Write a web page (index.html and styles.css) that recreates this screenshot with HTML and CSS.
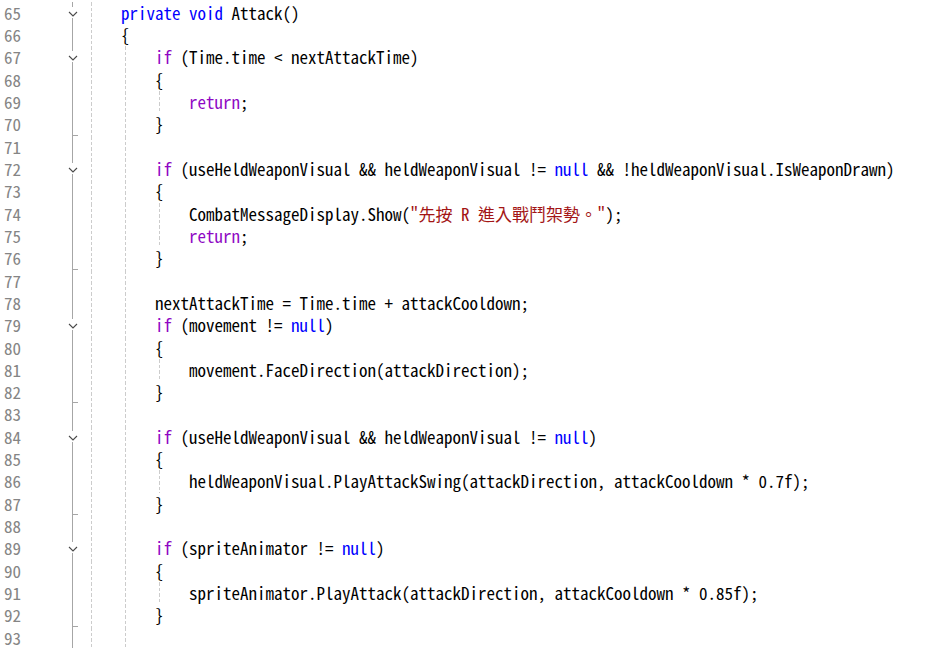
FILE: index.html
```html
<!DOCTYPE html>
<html lang="zh-Hant">
<head>
<meta charset="utf-8">
<title>Attack</title>
<link rel="stylesheet" href="styles.css">
</head>
<body>
<div class="editor">
  <div class="row"><span class="num">65</span><span class="fold chev"><svg class="chv" width="10" height="6" viewBox="0 0 10 6"><path d="M1 1L5 5L9 1"/></svg></span><span class="code"><span class="kw">private</span> <span class="kw">void</span> Attack()</span></div>
  <div class="row"><span class="num">66</span><span class="fold bar"></span><span class="code">{</span></div>
  <div class="row"><span class="num">67</span><span class="fold chev"><svg class="chv" width="10" height="6" viewBox="0 0 10 6"><path d="M1 1L5 5L9 1"/></svg></span><span class="code"><span class="g"></span><span class="ctl">if</span> (Time.time &lt; nextAttackTime)</span></div>
  <div class="row"><span class="num">68</span><span class="fold bar"></span><span class="code"><span class="g"></span>{</span></div>
  <div class="row"><span class="num">69</span><span class="fold bar"></span><span class="code"><span class="g"></span><span class="g"></span><span class="ctl">return</span>;</span></div>
  <div class="row"><span class="num">70</span><span class="fold end"></span><span class="code"><span class="g"></span>}</span></div>
  <div class="row"><span class="num">71</span><span class="fold bar"></span><span class="code"><span class="g"></span></span></div>
  <div class="row"><span class="num">72</span><span class="fold chev"><svg class="chv" width="10" height="6" viewBox="0 0 10 6"><path d="M1 1L5 5L9 1"/></svg></span><span class="code"><span class="g"></span><span class="ctl">if</span> (useHeldWeaponVisual &amp;&amp; heldWeaponVisual != <span class="kw">null</span> &amp;&amp; !heldWeaponVisual.IsWeaponDrawn)</span></div>
  <div class="row"><span class="num">73</span><span class="fold bar"></span><span class="code"><span class="g"></span>{</span></div>
  <div class="row"><span class="num">74</span><span class="fold bar"></span><span class="code"><span class="g"></span><span class="g"></span>CombatMessageDisplay.Show(<span class="str">"先按 R 進入戰鬥架勢。"</span>);</span></div>
  <div class="row"><span class="num">75</span><span class="fold bar"></span><span class="code"><span class="g"></span><span class="g"></span><span class="ctl">return</span>;</span></div>
  <div class="row"><span class="num">76</span><span class="fold end"></span><span class="code"><span class="g"></span>}</span></div>
  <div class="row"><span class="num">77</span><span class="fold bar"></span><span class="code"><span class="g"></span></span></div>
  <div class="row"><span class="num">78</span><span class="fold bar"></span><span class="code"><span class="g"></span>nextAttackTime = Time.time + attackCooldown;</span></div>
  <div class="row"><span class="num">79</span><span class="fold chev"><svg class="chv" width="10" height="6" viewBox="0 0 10 6"><path d="M1 1L5 5L9 1"/></svg></span><span class="code"><span class="g"></span><span class="ctl">if</span> (movement != <span class="kw">null</span>)</span></div>
  <div class="row"><span class="num">80</span><span class="fold bar"></span><span class="code"><span class="g"></span>{</span></div>
  <div class="row"><span class="num">81</span><span class="fold bar"></span><span class="code"><span class="g"></span><span class="g"></span>movement.FaceDirection(attackDirection);</span></div>
  <div class="row"><span class="num">82</span><span class="fold end"></span><span class="code"><span class="g"></span>}</span></div>
  <div class="row"><span class="num">83</span><span class="fold bar"></span><span class="code"><span class="g"></span></span></div>
  <div class="row"><span class="num">84</span><span class="fold chev"><svg class="chv" width="10" height="6" viewBox="0 0 10 6"><path d="M1 1L5 5L9 1"/></svg></span><span class="code"><span class="g"></span><span class="ctl">if</span> (useHeldWeaponVisual &amp;&amp; heldWeaponVisual != <span class="kw">null</span>)</span></div>
  <div class="row"><span class="num">85</span><span class="fold bar"></span><span class="code"><span class="g"></span>{</span></div>
  <div class="row"><span class="num">86</span><span class="fold bar"></span><span class="code"><span class="g"></span><span class="g"></span>heldWeaponVisual.PlayAttackSwing(attackDirection, attackCooldown * 0.7f);</span></div>
  <div class="row"><span class="num">87</span><span class="fold end"></span><span class="code"><span class="g"></span>}</span></div>
  <div class="row"><span class="num">88</span><span class="fold bar"></span><span class="code"><span class="g"></span></span></div>
  <div class="row"><span class="num">89</span><span class="fold chev"><svg class="chv" width="10" height="6" viewBox="0 0 10 6"><path d="M1 1L5 5L9 1"/></svg></span><span class="code"><span class="g"></span><span class="ctl">if</span> (spriteAnimator != <span class="kw">null</span>)</span></div>
  <div class="row"><span class="num">90</span><span class="fold bar"></span><span class="code"><span class="g"></span>{</span></div>
  <div class="row"><span class="num">91</span><span class="fold bar"></span><span class="code"><span class="g"></span><span class="g"></span>spriteAnimator.PlayAttack(attackDirection, attackCooldown * 0.85f);</span></div>
  <div class="row"><span class="num">92</span><span class="fold end"></span><span class="code"><span class="g"></span>}</span></div>
  <div class="row"><span class="num">93</span><span class="fold bar"></span><span class="code"><span class="g"></span></span></div>
</div>
</body>
</html>
```

FILE: styles.css
```css
html, body {
  margin: 0;
  background: #ffffff;
  overflow: hidden;
}

.editor {
  padding-top: 1.84px;
  font-family: "Noto Sans CJK TC", "Noto Sans CJK JP", "Liberation Mono", monospace;
  font-size: 17px;
  font-feature-settings: "hwid" 1;
  color: #000000;
}

.row {
  display: flex;
  height: 22.32px;
  line-height: 22.32px;
}

.num {
  flex: none;
  width: 21px;
  text-align: right;
  color: #858585;
}

.fold {
  flex: none;
  width: 70px;
}

.fold.bar {
  background: linear-gradient(#a6a6a6, #a6a6a6) no-repeat 51px 0 / 1px 100%;
}

.fold.end {
  background:
    linear-gradient(#a6a6a6, #a6a6a6) no-repeat 51px 100% / 6px 1px,
    linear-gradient(#a6a6a6, #a6a6a6) no-repeat 51px 0 / 1px 100%;
}

.fold.chev {
  background:
    linear-gradient(#a6a6a6, #a6a6a6) no-repeat 51px 0 / 1px 5px,
    linear-gradient(#a6a6a6, #a6a6a6) no-repeat 51px 16px / 1px calc(100% - 16px);
}

.chv {
  display: block;
  margin: 9px 0 0 46.5px;
}

.chv path {
  fill: none;
  stroke: #4a4a4a;
  stroke-width: 1.1;
}

.code {
  flex: 1;
  white-space: pre;
  padding-left: 30px;
  background: repeating-linear-gradient(to bottom, #cccccc 0 3.6px, transparent 3.6px 5.58px) no-repeat 0 0 / 1px 100%;
}

.g {
  display: inline-block;
  width: 34px;
  height: 22.32px;
  vertical-align: top;
  background: repeating-linear-gradient(to bottom, #cccccc 0 3.6px, transparent 3.6px 5.58px) no-repeat 4px 0 / 1px 100%;
}

.kw { color: #0000ff; }
.ctl { color: #8f08c4; }
.str { color: #a31515; }
```
